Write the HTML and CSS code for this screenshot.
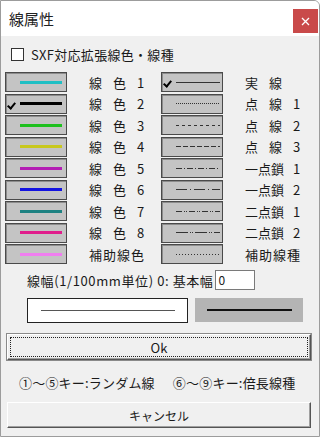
FILE: index.html
```html
<!DOCTYPE html>
<html lang="ja">
<head>
    <meta charset="UTF-8">
    <title>線属性</title>
    <link rel="stylesheet" href="styles.css">
</head>
<body>
    <div class="window">
        <div class="titlebar">
            <span class="title">線属性</span>
            <span class="close">
                <svg width="9" height="9" viewBox="0 0 9 9"><path d="M1 1L8 8M8 1L1 8" stroke="#fff" stroke-width="1.3"/></svg>
            </span>
        </div>

        <div class="client">
            <label class="sxf"><span class="checkbox"></span>SXF対応拡張線色・線種</label>

            <div class="grid">
                <!-- row 1 -->
                <div class="swatch"><span class="bar" style="background:#1fbfc4"></span></div>
                <div class="lbl"><i>線</i><i>色</i><i>1</i></div>
                <div class="swatch"><span class="tick"></span><svg class="ln" width="44" height="3"><line x1="0" y1="1.5" x2="44" y2="1.5"/></svg></div>
                <div class="lbl"><i>実</i><i>線</i></div>
                <!-- row 2 -->
                <div class="swatch"><span class="tick"></span><span class="bar" style="background:#000"></span></div>
                <div class="lbl"><i>線</i><i>色</i><i>2</i></div>
                <div class="swatch"><svg class="ln" width="44" height="3"><line x1="0" y1="1.5" x2="44" y2="1.5" stroke-dasharray="1 1"/></svg></div>
                <div class="lbl"><i>点</i><i>線</i><i>1</i></div>
                <!-- row 3 -->
                <div class="swatch"><span class="bar" style="background:#1ec01e"></span></div>
                <div class="lbl"><i>線</i><i>色</i><i>3</i></div>
                <div class="swatch"><svg class="ln" width="44" height="3"><line x1="0" y1="1.5" x2="44" y2="1.5" stroke-dasharray="3 3"/></svg></div>
                <div class="lbl"><i>点</i><i>線</i><i>2</i></div>
                <!-- row 4 -->
                <div class="swatch"><span class="bar" style="background:#c8c81e"></span></div>
                <div class="lbl"><i>線</i><i>色</i><i>4</i></div>
                <div class="swatch"><svg class="ln" width="44" height="3"><line x1="0" y1="1.5" x2="44" y2="1.5" stroke-dasharray="5 2"/></svg></div>
                <div class="lbl"><i>点</i><i>線</i><i>3</i></div>
                <!-- row 5 -->
                <div class="swatch"><span class="bar" style="background:#b41eb4"></span></div>
                <div class="lbl"><i>線</i><i>色</i><i>5</i></div>
                <div class="swatch"><svg class="ln" width="44" height="3"><line x1="0" y1="1.5" x2="44" y2="1.5" stroke-dasharray="6 2 1 2"/></svg></div>
                <div class="lbl"><i class="w2">一点鎖</i><i>1</i></div>
                <!-- row 6 -->
                <div class="swatch"><span class="bar" style="background:#1414e0"></span></div>
                <div class="lbl"><i>線</i><i>色</i><i>6</i></div>
                <div class="swatch"><svg class="ln" width="44" height="3"><line x1="0" y1="1.5" x2="44" y2="1.5" stroke-dasharray="11 3 1 3"/></svg></div>
                <div class="lbl"><i class="w2">一点鎖</i><i>2</i></div>
                <!-- row 7 -->
                <div class="swatch"><span class="bar" style="background:#1e8282"></span></div>
                <div class="lbl"><i>線</i><i>色</i><i>7</i></div>
                <div class="swatch"><svg class="ln" width="44" height="3"><line x1="0" y1="1.5" x2="44" y2="1.5" stroke-dasharray="6 2 1 1 1 2"/></svg></div>
                <div class="lbl"><i class="w2">二点鎖</i><i>1</i></div>
                <!-- row 8 -->
                <div class="swatch"><span class="bar" style="background:#e01e8c"></span></div>
                <div class="lbl"><i>線</i><i>色</i><i>8</i></div>
                <div class="swatch"><svg class="ln" width="44" height="3"><line x1="0" y1="1.5" x2="44" y2="1.5" stroke-dasharray="12 2 1 1 1 2"/></svg></div>
                <div class="lbl"><i class="w2">二点鎖</i><i>2</i></div>
                <!-- row 9 -->
                <div class="swatch"><span class="bar" style="background:#f07ef0"></span></div>
                <div class="lbl">補助線色</div>
                <div class="swatch"><svg class="ln" width="44" height="3"><line x1="0" y1="1.5" x2="44" y2="1.5" stroke-dasharray="1 2"/></svg></div>
                <div class="lbl">補助線種</div>
            </div>

            <div class="width-row">
                <span>線幅(1/100mm単位) 0: 基本幅</span>
                <span class="input">0</span>
            </div>

            <div class="preview">
                <div class="pv-white"><span class="pv-line thin"></span></div>
                <div class="pv-gray"><span class="pv-line thick"></span></div>
            </div>

            <div class="btn default"><span class="focus">Ok</span></div>

            <div class="hint"><span>①～⑤キー:ランダム線</span><span>⑥～⑨キー:倍長線種</span></div>

            <div class="btn cancel">キャンセル</div>
        </div>
    </div>
</body>
</html>
```

FILE: styles.css
```css
body {
    margin: 0;
    background: #fff;
    font-family: "Noto Sans CJK JP", "Noto Sans", sans-serif;
    color: #1a1a1a;
}
.window {
    width: 320px;
    height: 437px;
    box-sizing: border-box;
    border: 1px solid #9c9c9c;
    border-radius: 0 6px 0 0;
    background: #f0f0f0;
    overflow: hidden;
}
.titlebar {
    height: 35px;
    background: #fff;
    display: flex;
    align-items: center;
    justify-content: space-between;
}
.title {
    font-size: 15px;
    padding-left: 8px;
    color: #222;
}
.close {
    width: 25px;
    height: 24px;
    margin-right: 1px;
    margin-top: 5px;
    background: #c94a4a;
    display: flex;
    align-items: center;
    justify-content: center;
}
.client {
    padding: 0 4px;
}
.sxf {
    display: flex;
    align-items: center;
    height: 14px;
    margin-top: 11px;
    padding-left: 6px;
    font-size: 13px;
    letter-spacing: 0.3px;
    gap: 7px;
}
.checkbox {
    width: 11px;
    height: 11px;
    border: 1px solid #333;
    background: #fff;
}
.grid {
    margin-top: 11px;
    display: grid;
    grid-template-columns: 62px 94px 62px 1fr;
    grid-auto-rows: 20px;
    row-gap: 1.5px;
}
.swatch {
    position: relative;
    box-sizing: border-box;
    border: 1px solid #4a4a4a;
    box-shadow: inset 1px 1px #8c8c8c;
    background: #c4c4c4;
    display: flex;
    align-items: center;
    padding-left: 14px;
}
.bar {
    width: 42px;
    height: 3px;
}
.ln line {
    stroke: #333;
    stroke-width: 1;
}
.tick {
    position: absolute;
    left: 3px;
    top: 6px;
    width: 3px;
    height: 6px;
    border: solid #000;
    border-width: 0 2px 2px 0;
    transform: rotate(40deg);
}
.lbl {
    display: flex;
    align-items: center;
    padding-left: 22px;
    font-size: 13px;
    letter-spacing: 1px;
}
.lbl i {
    font-style: normal;
    width: 24px;
    flex: none;
}
.lbl i.w2 {
    width: 48px;
    letter-spacing: 0;
}
.width-row {
    display: flex;
    align-items: center;
    gap: 2px;
    height: 20px;
    margin-top: 6px;
    padding-left: 22px;
    font-size: 13px;
    letter-spacing: 0.6px;
}
.input {
    width: 36px;
    height: 18px;
    border: 1px solid #7a7a7a;
    background: #fff;
    font-size: 12px;
    line-height: 18px;
    padding-left: 2px;
    letter-spacing: 0;
}
.preview {
    display: flex;
    gap: 7px;
    margin-top: 8px;
    padding-left: 22px;
}
.pv-white {
    width: 161px;
    height: 25px;
    box-sizing: border-box;
    border: 1px solid #222;
    background: #fff;
    display: flex;
    align-items: center;
    justify-content: center;
}
.pv-gray {
    width: 108px;
    height: 24px;
    background: #b4b4b4;
    display: flex;
    align-items: center;
    justify-content: center;
}
.pv-line.thin {
    width: 134px;
    height: 1px;
    background: #555;
}
.pv-line.thick {
    width: 85px;
    height: 2px;
    background: #111;
}
.btn {
    margin-left: 2px;
    width: 304px;
    height: 26px;
    box-sizing: border-box;
    border: 1px solid;
    border-color: #fff #555 #555 #fff;
    box-shadow: inset -1px -1px #a0a0a0;
    background: #f0f0f0;
    font-size: 13px;
    display: flex;
    align-items: center;
    justify-content: center;
}
.btn.default {
    margin-top: 11px;
    padding: 3px;
    outline: 1px solid #8a8a8a;
}
.focus {
    flex: 1;
    align-self: stretch;
    outline: 1px dotted #222;
    display: flex;
    align-items: center;
    justify-content: center;
}
.hint {
    display: flex;
    gap: 18px;
    height: 20px;
    margin-top: 12px;
    padding-left: 14px;
    align-items: center;
    font-size: 13px;
    letter-spacing: 0.2px;
}
.btn.cancel {
    margin-top: 10px;
    font-size: 12px;
}
```
